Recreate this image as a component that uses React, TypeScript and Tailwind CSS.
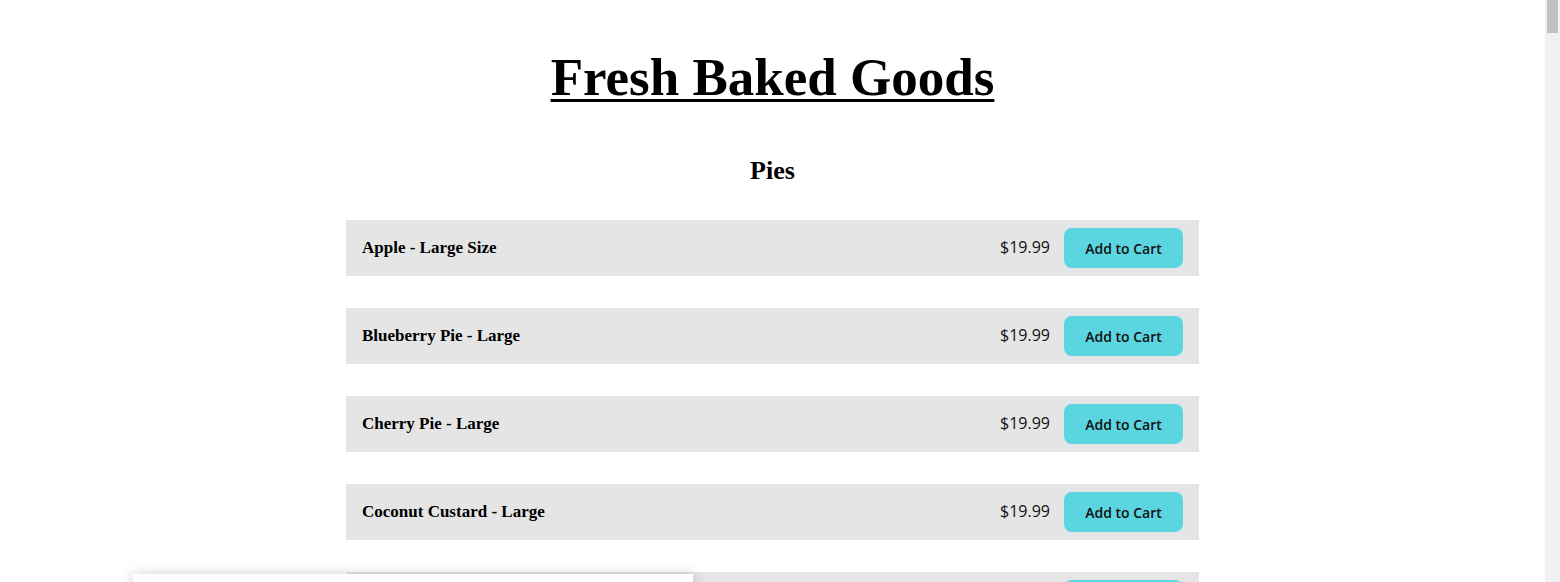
import React from 'react';

const pies = [
  { name: 'Apple - Large Size', price: '$19.99' },
  { name: 'Blueberry Pie - Large', price: '$19.99' },
  { name: 'Cherry Pie - Large', price: '$19.99' },
  { name: 'Coconut Custard - Large', price: '$19.99' },
  { name: 'Pecan Pie - Large', price: '$19.99' },
  { name: 'Pumpkin Pie - Large', price: '$19.99' },
];

function ItemRow({ name, price }: { name: string; price: string }) {
  return (
    <div className="flex items-center justify-between h-[56px] bg-[#e5e5e5] pl-4 pr-4">
      <span className="font-['Liberation_Serif',serif] text-[17px] font-semibold text-black">{name}</span>
      <div className="flex items-center gap-[14px]">
        <span className="font-['Open_Sans',sans-serif] text-[16px] text-[#111] -mt-[2px]">{price}</span>
        <button className="w-[119px] h-[40px] rounded-lg bg-[#5bd5e0] font-['Open_Sans',sans-serif] text-[14px] font-semibold text-[#111]">
          Add to Cart
        </button>
      </div>
    </div>
  );
}

export default function App() {
  return (
    <div className="min-h-screen bg-white">
      <div className="w-[1545px]">
        {/* Header */}
        <h1 className="pt-[47px] text-center">
          <span className="font-['Liberation_Serif',serif] text-[53px] font-bold leading-[60px] text-black underline decoration-[3px] underline-offset-[4px]">
            Fresh Baked Goods
          </span>
        </h1>

        <h2 className="mt-[49px] text-center font-['Liberation_Serif',serif] text-[26px] font-semibold leading-[30px] text-black">
          Pies
        </h2>

        <div className="mx-auto mt-[34px] flex w-[853px] flex-col gap-[32px] pb-10">
          {pies.map((p) => (
            <ItemRow key={p.name} name={p.name} price={p.price} />
          ))}
        </div>
      </div>

      {/* Bottom panel */}
      <div className="fixed left-[133px] top-[574px] h-[200px] w-[560px] bg-white shadow-[0_0_12px_rgba(0,0,0,0.18)]" />

      {/* Scrollbar */}
      <div className="fixed right-0 top-0 h-full w-[15px] bg-[#f1f1f1]">
        <div className="mx-auto h-[33px] w-[11px] bg-[#c1c1c1]" />
      </div>
    </div>
  );
}
